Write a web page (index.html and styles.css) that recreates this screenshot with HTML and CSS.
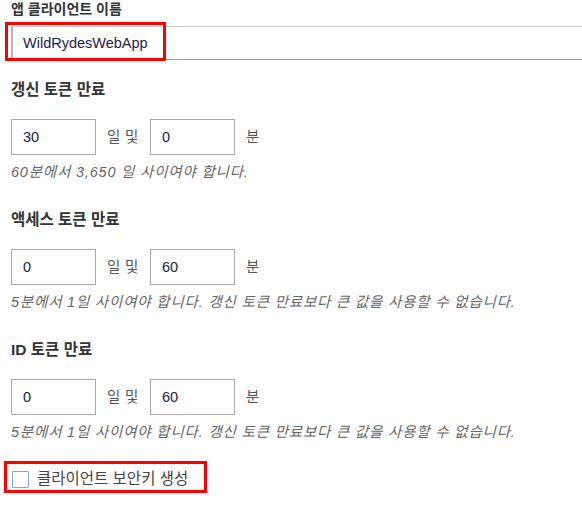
FILE: index.html
```html
<!DOCTYPE html>
<html lang="ko">
<head>
<meta charset="utf-8">
<link rel="stylesheet" href="styles.css">
</head>
<body>
<div class="form">
  <div class="field first">
    <div class="label label-name">앱 클라이언트 이름</div>
    <div class="wide-wrap">
      <div class="wide-input">WildRydesWebApp</div>
      <span class="highlight hl-name"></span>
    </div>
  </div>

  <div class="field second">
    <div class="label">갱신 토큰 만료</div>
    <div class="row">
      <div class="box">30</div>
      <span class="unit days">일 및</span>
      <div class="box">0</div>
      <span class="unit">분</span>
    </div>
    <div class="help">60분에서 3,650 일 사이여야 합니다.</div>
  </div>

  <div class="field">
    <div class="label">액세스 토큰 만료</div>
    <div class="row">
      <div class="box">0</div>
      <span class="unit days">일 및</span>
      <div class="box">60</div>
      <span class="unit">분</span>
    </div>
    <div class="help">5분에서 1일 사이여야 합니다. 갱신 토큰 만료보다 큰 값을 사용할 수 없습니다.</div>
  </div>

  <div class="field">
    <div class="label">ID 토큰 만료</div>
    <div class="row">
      <div class="box">0</div>
      <span class="unit days">일 및</span>
      <div class="box">60</div>
      <span class="unit">분</span>
    </div>
    <div class="help">5분에서 1일 사이여야 합니다. 갱신 토큰 만료보다 큰 값을 사용할 수 없습니다.</div>
  </div>

  <div class="check-row">
    <span class="checkbox"></span>
    <span class="check-label">클라이언트 보안키 생성</span>
    <span class="highlight hl-check"></span>
  </div>
</div>
</body>
</html>
```

FILE: styles.css
```css
html, body {
  margin: 0;
  padding: 0;
  background: #ffffff;
}

html {
  overflow: hidden;
}

body {
  font-family: "Liberation Sans", "Noto Sans CJK KR", sans-serif;
  color: #333333;
}

.form {
  padding: 0 0 30px 11px;
}

.field {
  padding-top: 30px;
}

.field.first {
  padding-top: 0;
}

.field.second {
  padding-top: 21px;
}

.label {
  font-size: 15.5px;
  font-weight: bold;
  line-height: 18px;
  height: 18px;
  color: #333333;
}

.label.label-name {
  font-size: 14px;
}

.wide-wrap {
  position: relative;
  margin-top: 8px;
}

.wide-input {
  box-sizing: border-box;
  width: 571px;
  height: 34px;
  border-top: 1px solid #c6c6c6;
  border-bottom: 1px solid #9a9a9a;
  border-left: 2px solid #b4b4b4;
  padding-left: 10px;
  font-size: 14.5px;
  line-height: 32px;
  color: #222244;
}

.highlight {
  position: absolute;
  box-sizing: border-box;
  border: 3px solid #ff0000;
}

.hl-name {
  left: -6px;
  top: -4px;
  width: 161px;
  height: 39px;
}

.row {
  display: flex;
  align-items: center;
  gap: 11px;
  margin-top: 20px;
}

.box {
  box-sizing: border-box;
  flex: 0 0 85px;
  height: 36px;
  border: 1px solid #a9a9a9;
  padding-left: 11px;
  font-size: 14.5px;
  line-height: 34px;
  color: #222244;
}

.unit {
  font-size: 14.5px;
  color: #555555;
  line-height: 18px;
  white-space: nowrap;
  flex: 0 0 auto;
}

.unit.days {
  width: 32px;
  letter-spacing: 0.3px;
}

.help {
  margin-top: 8px;
  font-size: 14.5px;
  line-height: 18px;
  letter-spacing: 0.8px;
  font-style: italic;
  color: #666666;
  white-space: nowrap;
}

.check-row {
  position: relative;
  display: flex;
  align-items: center;
  gap: 8px;
  margin-top: 29px;
  height: 18px;
  padding-left: 1px;
}

.checkbox {
  box-sizing: border-box;
  width: 17px;
  height: 17px;
  border: 1.5px solid #78aedc;
  border-radius: 1px;
  background: #ffffff;
}

.check-label {
  font-size: 15.5px;
  line-height: 18px;
  color: #444444;
}

.hl-check {
  left: -7px;
  top: -9px;
  width: 203px;
  height: 32px;
}
```
